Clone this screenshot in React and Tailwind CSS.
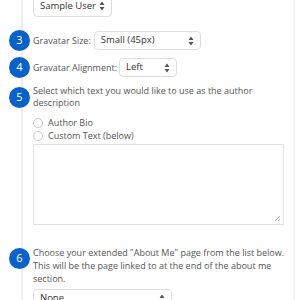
import React from "react";

const Arrows = () => (
  <svg width="6" height="10" viewBox="0 0 6 10" className="shrink-0">
    <path d="M3 0.5 L5.5 4 H0.5 Z" fill="#555" />
    <path d="M3 9.5 L5.5 6 H0.5 Z" fill="#555" />
  </svg>
);

const Select = ({ label, className }) => (
  <div
    className={`flex items-center justify-between whitespace-nowrap rounded-[4px] border border-[#dedede] bg-white pl-[6px] pr-[6px] text-[9.5px] text-[#333] ${className}`}
  >
    <span>{label}</span>
    <Arrows />
  </div>
);

const Num = ({ n, className = "" }) => (
  <div
    className={`flex h-[21px] w-[21px] shrink-0 items-center justify-center rounded-full bg-[#0a62c8] text-[11px] text-white ${className}`}
  >
    {n}
  </div>
);

const Radio = ({ label }) => (
  <div className="flex items-center gap-[5px] h-[13px]">
    <div className="h-[10px] w-[10px] rounded-full border border-[#c8c8c8] bg-white" />
    <span>{label}</span>
  </div>
);

export default function App() {
  return (
    <div
      className="relative h-[300px] w-[300px] overflow-hidden bg-white text-[9px] text-[#555] whitespace-nowrap"
      style={{ fontFamily: '"Open Sans", "Liberation Sans", sans-serif' }}
    >
      <div className="absolute left-[21px] top-0 h-full w-[2px] bg-[#eeeeee]" />
      <div className="absolute left-[293px] top-0 h-full w-[2px] bg-[#f3f3f3]" />

      <div className="relative pl-[9px]">
        <Select label="Sample User" className="ml-[24px] mt-[-5px] h-[22px] w-[79px]" />

        <div className="mt-[13px] flex items-center">
          <Num n="3" />
          <span className="ml-[3px]">Gravatar Size:</span>
          <Select label="Small (45px)" className="ml-[3px] h-[19px] w-[107px]" />
        </div>

        <div className="mt-[6px] flex items-center">
          <Num n="4" />
          <span className="ml-[3px]">Gravatar Alignment:</span>
          <Select label="Left" className="ml-[2px] h-[19px] w-[58px]" />
        </div>

        <div className="mt-[7px] flex items-start">
          <Num n="5" className="mt-[2px]" />
          <div className="ml-[3px] leading-[12px]">
            Select which text you would like to use as the author
            <br />
            description
          </div>
        </div>

        <div className="ml-[24px] mt-[7px] flex flex-col">
          <Radio label="Author Bio" />
          <Radio label="Custom Text (below)" />
          <div className="relative mt-[2px] h-[81px] w-[251px] border border-[#e2e2e2] bg-white">
            <svg width="7" height="7" viewBox="0 0 7 7" className="absolute bottom-[2px] right-[2px]">
              <path d="M1 6 L6 1 M4 6 L6 4" stroke="#aaa" strokeWidth="0.8" />
            </svg>
          </div>
        </div>

        <div className="mt-[21px] flex items-start">
          <Num n="6" className="mt-[2px]" />
          <div className="ml-[3px] leading-[13px]">
            Choose your extended "About Me" page from the list below.
            <br />
            This will be the page linked to at the end of the about me
            <br />
            section.
          </div>
        </div>

        <Select label="None" className="ml-[24px] mt-[4px] h-[19px] w-[139px]" />
      </div>
    </div>
  );
}
